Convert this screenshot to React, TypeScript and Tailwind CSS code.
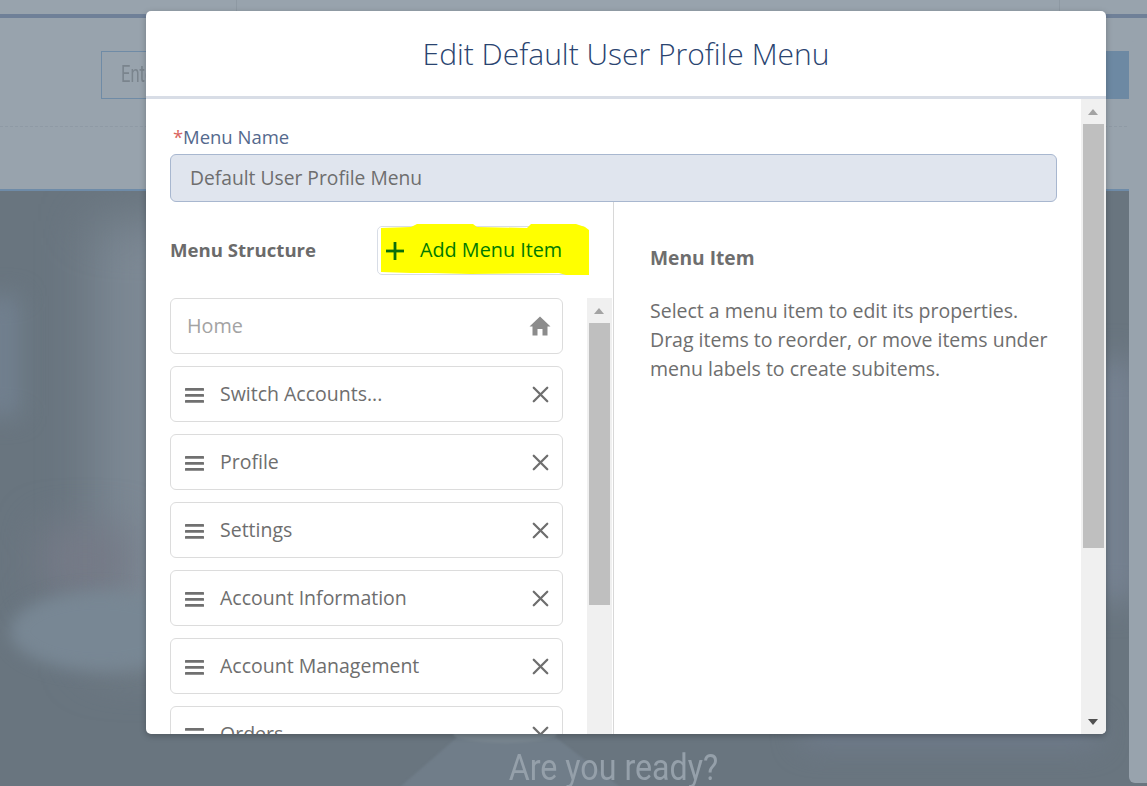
import { X } from "lucide-react";

const items = [
  "Switch Accounts...",
  "Profile",
  "Settings",
  "Account Information",
  "Account Management",
  "Orders",
];

function Scrollbar({ thumbTop, thumbHeight, className }: { thumbTop: string; thumbHeight: string; className: string }) {
  return (
    <div className={`relative shrink-0 bg-[#f0f0f0] ${className}`}>
      <div className="absolute left-1/2 top-[10px] -ml-[5.5px] border-x-[5.5px] border-b-[6px] border-x-transparent border-b-[#a3a3a3]" />
      <div className={`absolute inset-x-[2px] bg-[#bfbfbf] ${thumbTop} ${thumbHeight}`} />
    </div>
  );
}

function HomeIcon() {
  return (
    <svg width="22" height="20" viewBox="0 0 22 20" fill="#8c8c8c">
      <path d="M11 0.5 L21.5 10.5 L18.5 10.5 L18.5 19.5 L13.5 19.5 L13.5 13 L8.5 13 L8.5 19.5 L3.5 19.5 L3.5 10.5 L0.5 10.5 Z" />
    </svg>
  );
}

function DragIcon() {
  return (
    <svg width="19" height="15" viewBox="0 0 19 15" fill="#707070" className="mt-[3px] shrink-0">
      <rect x="0" y="0" width="19" height="2.8" rx="0.6" />
      <rect x="0" y="6" width="19" height="2.8" rx="0.6" />
      <rect x="0" y="12" width="19" height="2.8" rx="0.6" />
    </svg>
  );
}

function Background() {
  return (
    <div className="flex h-full flex-col">
      <div className="relative h-[14px] shrink-0 bg-[#98a3ad]">
        <div className="absolute bottom-0 left-[236px] top-0 w-px bg-[#8e99a3]" />
        <div className="absolute bottom-0 left-[1059px] top-0 w-px bg-[#8e99a3]" />
      </div>
      <div className="h-[4px] shrink-0 bg-[#6f8098]" />
      <div className="relative h-[171px] shrink-0 bg-[#98a3ad]">
        <div className="absolute left-[101px] top-[33px] flex h-[48px] w-[1029px] items-center border border-[#6f8ba6] pl-[19px] font-['Roboto',sans-serif] text-[23px] text-[#7a848d]">
          <span className="origin-left scale-x-[0.72]">Enter</span>
        </div>
        <div className="absolute right-[17px] top-[33px] h-[48px] w-[100px] bg-[#6d89a3]" />
        <div className="absolute inset-x-0 top-[108px] border-t border-dashed border-[#8f9aa5]" />
      </div>
      <div className="h-[2px] shrink-0 bg-[#6e8ba8]" />
      <div className="relative flex-1 overflow-hidden bg-[#69757f]">
        <div className="absolute left-[95px] top-[30px] h-[440px] w-[120px] bg-[#7d8995] blur-[26px]" />
        <div className="absolute left-[-20px] top-[105px] h-[120px] w-[40px] bg-[#71808f] blur-[12px]" />
        <div className="absolute left-[40px] top-[335px] h-[70px] w-[90px] bg-[#757a87] blur-[20px]" />
        <div className="absolute left-[10px] top-[400px] h-[80px] w-[180px] rounded-[50%] bg-[#788794] blur-[8px]" />
        <div className="absolute left-[1095px] top-[170px] h-[240px] w-[40px] bg-[#788494] blur-[16px]" />
        <div className="absolute left-[800px] top-[530px] h-[25px] w-[300px] rounded-full bg-[#6f7b8c] blur-[14px]" />
        <svg className="absolute left-[400px] top-[540px] blur-[1px]" width="240" height="56" viewBox="0 0 240 56">
          <polygon points="62,2 150,2 220,56 0,56" fill="#707d89" />
          <ellipse cx="105" cy="3" rx="52" ry="9" fill="#78858f" />
        </svg>
        <div className="absolute inset-x-0 top-[558px] flex justify-center pl-[80px]">
          <span className="scale-x-[0.87] font-['Roboto',sans-serif] text-[37px] leading-none text-[#95a0aa]">
            Are you ready?
          </span>
        </div>
      </div>
    </div>
  );
}

export default function App() {
  return (
    <div className="relative h-[786px] w-[1147px] overflow-hidden font-['Open_Sans',sans-serif]">
      <Background />

      <div className="absolute bottom-[3px] left-[1129px] right-0 top-[41px] rounded-l-[6px] bg-[#98a3ad]" />

      <div className="absolute left-[146px] top-[11px] flex h-[723px] w-[960px] flex-col overflow-hidden rounded-[5px] bg-white shadow-[0_2px_6px_rgba(0,0,0,0.25)]">
        <div className="flex h-[88px] shrink-0 items-center justify-center border-b-[3px] border-[#d8dde6] text-[30px] font-light text-[#2a4470]">
          Edit Default User Profile Menu
        </div>

        <div className="flex min-h-0 flex-1">
          <div className="min-w-0 flex-1 px-[24px] pt-[27px]">
            <div className="flex h-[21px] items-center text-[18.5px] text-[#54698d]">
              <span className="ml-[3px] w-[10px] text-[#d9655f]">*</span>
              Menu Name
            </div>
            <div className="mt-[7px] flex h-[48px] items-center rounded-[6px] border border-[#a8b7cf] bg-[#e0e5ee] pl-[19px] text-[19.25px] text-[#6e6e6e]">
              Default User Profile Menu
            </div>

            <div className="flex">
              <div className="w-[444px] shrink-0 border-r border-[#d8d8d8]">
                <div className="flex h-[96px] items-center pr-[26px] pt-[1px]">
                  <span className="-mt-[2px] text-[18.6px] font-bold text-[#6b6b6b]">Menu Structure</span>
                  <div className="relative ml-auto flex h-[49px] w-[210px] items-center rounded-[5px] border border-[#d8dde6] pl-[8px] text-[19.8px] text-[#007a00]">
                    <svg className="absolute -top-[3px] left-[3px]" width="208" height="52" viewBox="0 0 208 52" fill="#ffff00">
                      <polygon points="0,4 30,3 36,0 92,0 96,3 146,4 150,0 195,0 204,3 208,6 208,51 185,51 178,49 90,50 50,49 30,49 0,48" />
                    </svg>
                    <svg className="relative shrink-0" width="18" height="18" viewBox="0 0 18 18" fill="#0a6e0a">
                      <rect x="7.6" y="0" width="2.8" height="18" />
                      <rect x="0" y="7.6" width="18" height="2.8" />
                    </svg>
                    <span className="relative -mt-[1px] ml-[16px]">Add Menu Item</span>
                  </div>
                </div>
                <div className="flex h-[436px] overflow-hidden">
                  <div className="flex w-[393px] shrink-0 flex-col gap-[12px]">
                    <div className="flex h-[56px] shrink-0 items-center justify-between rounded-[6px] border border-[#dcdcdc] pl-[16px] pr-[11px] text-[19.8px] text-[#a3a3a3]">
                      Home
                      <HomeIcon />
                    </div>
                    {items.map((item) => (
                      <div
                        key={item}
                        className="flex h-[56px] shrink-0 items-center rounded-[6px] border border-[#dcdcdc] pl-[14px] pr-[8px] text-[19.5px] text-[#6e6e6e]"
                      >
                        <DragIcon />
                        <span className="ml-[16px]">{item}</span>
                        <X className="ml-auto h-[27px] w-[27px] text-[#6e6e6e]" strokeWidth={2} />
                      </div>
                    ))}
                  </div>
                  <Scrollbar className="ml-[24px] h-full w-[25px]" thumbTop="top-[25px]" thumbHeight="h-[282px]" />
                </div>
              </div>

              <div className="flex-1 pl-[36px] pt-[41px] text-[19.5px] leading-[29px] text-[#6e6e6e]">
                <h2 className="text-[19.2px] font-bold">Menu Item</h2>
                <p className="mt-[24px]">
                  Select a menu item to edit its properties. Drag items to reorder, or move items under menu labels to create subitems.
                </p>
              </div>
            </div>
          </div>

          <div className="relative h-full w-[25px] shrink-0">
            <Scrollbar className="h-full w-full" thumbTop="top-[25px]" thumbHeight="h-[424px]" />
            <div className="absolute bottom-[9px] left-1/2 -ml-[5.5px] border-x-[5.5px] border-t-[6px] border-x-transparent border-t-[#505050]" />
          </div>
        </div>
      </div>
    </div>
  );
}
